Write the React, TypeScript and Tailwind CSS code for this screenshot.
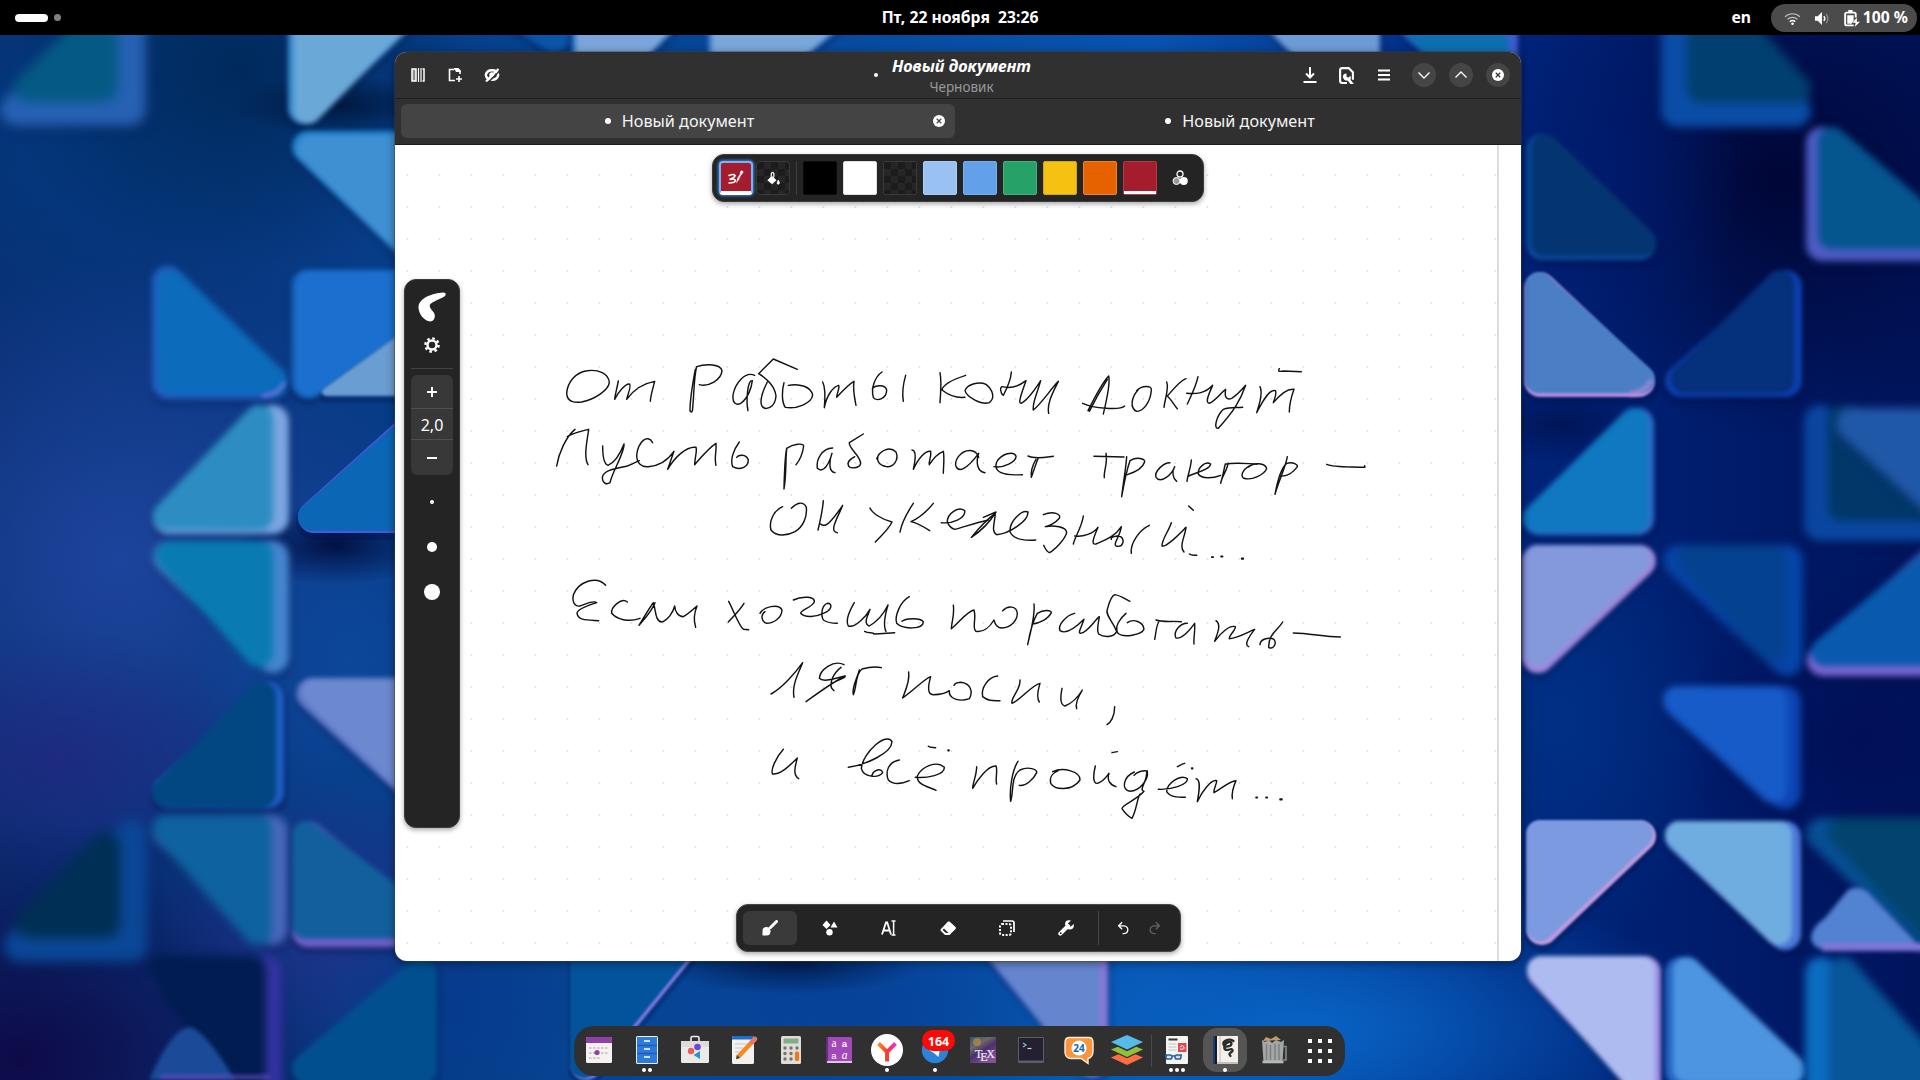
import React from "react";

type Corner = "tl" | "tr" | "bl" | "br";
type Tri = {
  x: number; y: number; w: number; h: number; c: Corner;
  face: string; rim?: string; l?: number; r?: number; t?: number; b?: number; blur?: number; rad?: number;
};

const TRIS: Tri[] = [
  { x: 0, y: -14, w: 146, h: 140, c: "br", face: "#045a85", rim: "#2661b4", r: 28, b: 24, l: 14, t: 14, blur: 4.5 },
  { x: 288, y: -20, w: 150, h: 144, c: "tl", face: "#6aa8d8", rim: "#3b8ccf", l: 6, r: 2, blur: 2 },
  { x: 292, y: 131, w: 142, h: 137, c: "tr", face: "#3f8fd3", rim: "#1f82cc", l: 5, t: 4, blur: 2 },
  { x: 152, y: 266, w: 136, h: 133, c: "bl", face: "#0c6bbb", rim: "#2560c8", l: 5, b: 4, t: 4, blur: 2.4 },
  { x: 291, y: 270, w: 170, h: 128, c: "tl", face: "#1b70cf", rim: "#1560b8", l: 5, blur: 2 },
  { x: 322, y: 300, w: 130, h: 96, c: "br", face: "#6a9dd2", blur: 1.2, rad: 4 },
  { x: 153, y: 405, w: 136, h: 129, c: "br", face: "#2d8dc2", rim: "#7aa6e2", r: 16, b: 4, blur: 2.4 },
  { x: 298, y: 404, w: 140, h: 129, c: "br", face: "#0b66b6", rim: "#4b56dc", b: 2, blur: 0.6 },
  { x: 153, y: 541, w: 136, h: 132, c: "tr", face: "#097bb2", rim: "#4585d0", r: 16, l: 3, b: 6, blur: 3 },
  { x: 152, y: 682, w: 132, h: 126, c: "br", face: "#024782", rim: "#1e5cc4", r: 8, b: 1, blur: 1.5 },
  { x: 296, y: 678, w: 140, h: 130, c: "tr", face: "#6c88cf", rim: "#5a74c8", l: 5, blur: 2 },
  { x: 4, y: 820, w: 144, h: 142, c: "br", face: "#002f55", rim: "#0a4796", r: 28, b: 24, l: 12, t: 12, blur: 4.5 },
  { x: 152, y: 815, w: 136, h: 130, c: "tr", face: "#0e629f", rim: "#4868bc", r: 16, blur: 3.4 },
  { x: 292, y: 821, w: 150, h: 126, c: "bl", face: "#135f9e", rim: "#735fc8", b: 8, blur: 2 },
  { x: 148, y: 956, w: 134, h: 150, c: "tr", face: "#001c50", rim: "#3434a4", r: 16, blur: 4 },
  { x: 292, y: 957, w: 145, h: 128, c: "br", face: "#024f90", blur: 2 },
  { x: 1661, y: -30, w: 150, h: 157, c: "bl", face: "#003f70", rim: "#0a4da6", l: 26, b: 24, blur: 4 },
  { x: 1526, y: 134, w: 130, h: 126, c: "bl", face: "#043572", rim: "#0a4a9c", l: 5, b: 4, blur: 1.5 },
  { x: 1806, y: 127, w: 150, h: 134, c: "bl", face: "#05558f", rim: "#4d5cc4", l: 12, b: 12, blur: 2.8 },
  { x: 1524, y: 272, w: 131, h: 125, c: "bl", face: "#4a7fc6", rim: "#b08be0", b: 4, l: 1, blur: 1 },
  { x: 1665, y: 270, w: 137, h: 127, c: "br", face: "#04307c", rim: "#0b3eac", l: 6, r: 8, b: 4, blur: 1.5 },
  { x: 1523, y: 408, w: 131, h: 127, c: "br", face: "#0f78c0", rim: "#2b6fcb", r: 6, b: 3, blur: 2 },
  { x: 1804, y: 405, w: 190, h: 136, c: "bl", face: "#00386a", rim: "#0a46a0", l: 24, b: 20, blur: 3.5 },
  { x: 1836, y: 408, w: 140, h: 130, c: "tr", face: "#2058a8", blur: 4 },
  { x: 1522, y: 545, w: 134, h: 128, c: "tl", face: "#8499dc", rim: "#a088dc", r: 5, b: 7, l: 2, blur: 1.8 },
  { x: 1663, y: 545, w: 140, h: 131, c: "tr", face: "#044290", rim: "#0644a8", l: 14, r: 16, b: 14, blur: 3.5 },
  { x: 1807, y: 543, w: 146, h: 133, c: "br", face: "#095aae", rim: "#7766d2", b: 10, l: 4, blur: 2.4 },
  { x: 1663, y: 686, w: 138, h: 123, c: "tr", face: "#165bc8", rim: "#0c44b4", r: 14, b: 6, blur: 2.8 },
  { x: 1526, y: 820, w: 130, h: 125, c: "tl", face: "#7c9ae0", rim: "#c09ade", r: 3, b: 4, blur: 1 },
  { x: 1665, y: 821, w: 136, h: 129, c: "tr", face: "#6facdf", rim: "#4b78da", r: 9, b: 5, blur: 1.8 },
  { x: 1806, y: 818, w: 190, h: 180, c: "tr", face: "#02446f", rim: "#064f94", l: 22, blur: 4 },
  { x: 1527, y: 956, w: 134, h: 140, c: "tr", face: "#aebbf0", rim: "#a08ee4", r: 6, blur: 1.6 },
  { x: 1665, y: 957, w: 140, h: 130, c: "bl", face: "#4d95e0", rim: "#2466c2", l: 8, b: 4, blur: 2 },
  { x: 1805, y: 957, w: 160, h: 150, c: "bl", face: "#085598", rim: "#0b6cc0", l: 24, blur: 3.5 },
  { x: 380, y: -80, w: 190, h: 132, c: "tr", face: "#0a55a8", blur: 2 },
  { x: 572, y: -10, w: 120, h: 120, c: "tl", face: "#7ba5da", rim: "#2f7acb", l: 4, blur: 2 },
  { x: 708, y: -10, w: 150, h: 130, c: "tl", face: "#79a7da", rim: "#3c80d0", l: 4, blur: 2 },
  { x: 1270, y: 10, w: 110, h: 110, c: "tr", face: "#6c9bd8", blur: 2 },
  { x: 1400, y: 10, w: 118, h: 110, c: "tr", face: "#0d6fb0", rim: "#3a5ed0", r: 10, blur: 2 },
  { x: 570, y: 930, w: 128, h: 150, c: "tl", face: "#03539c", rim: "#7f7be4", r: 2, b: 2, blur: 0.8 },
  { x: 978, y: 925, w: 130, h: 152, c: "tr", face: "#6585cf", rim: "#8878d8", r: 8, b: 4, blur: 2 },
];

function pts(x0: number, y0: number, x1: number, y1: number, c: Corner, r: number) {
  const a = x0 + r, b = x1 - r, t = y0 + r, d = y1 - r;
  if (c === "tl") return `${a},${t} ${b},${t} ${a},${d}`;
  if (c === "tr") return `${a},${t} ${b},${t} ${b},${d}`;
  if (c === "bl") return `${a},${t} ${a},${d} ${b},${d}`;
  return `${b},${t} ${a},${d} ${b},${d}`;
}

function Triangle({ t }: { t: Tri }) {
  const R = t.rad ?? 16;
  const x1 = t.x + t.w, y1 = t.y + t.h;
  const faceR = t.rim ? Math.max(R - 5, 3) + 3 : R;
  return (
    <g style={{ filter: `blur(${(t.blur ?? 1) * 1.25}px)` }}>
      <polygon points={pts(t.x, t.y + 3, x1 + 2, y1 + 5, t.c, R)} fill="#000c3c" stroke="#000c3c" strokeWidth={R * 2 + 4} strokeLinejoin="round" opacity="0.25" />
      {t.rim && <polygon points={pts(t.x, t.y, x1, y1, t.c, R)} fill={t.rim} stroke={t.rim} strokeWidth={R * 2} strokeLinejoin="round" />}
      <polygon
        points={pts(t.x + (t.l ?? 0), t.y + (t.t ?? 0), x1 - (t.r ?? 0), y1 - (t.b ?? 0), t.c, faceR)}
        fill={t.face} stroke={t.face} strokeWidth={faceR * 2} strokeLinejoin="round"
      />
    </g>
  );
}

const GLOWS: [number, number, number, number, string, number][] = [
  [60, 120, 300, 260, "#02387c", 0.9],
  [240, 70, 240, 200, "#002a5c", 1],
  [120, 560, 300, 300, "#1d449c", 1],
  [60, 760, 220, 130, "#26227e", 0.6],
  [20, 1060, 340, 240, "#0e0a48", 1],
  [350, 660, 160, 200, "#0c489c", 0.9],
  [330, 920, 170, 140, "#26308c", 0.8],
  [335, 545, 100, 40, "#000c3c", 0.9],
  [340, 105, 110, 30, "#00173c", 0.9],
  [1780, 180, 260, 260, "#000636", 1],
  [1600, 180, 140, 260, "#001c70", 0.8],
  [1560, 720, 160, 240, "#003084", 1],
  [1860, 740, 180, 180, "#001058", 1],
  [1560, 425, 90, 40, "#000c44", 0.6],
  [1300, 1030, 420, 160, "#0863c4", 1],
  [860, 1010, 260, 120, "#063f96", 0.8],
  [790, 965, 130, 30, "#001440", 0.8],
  [450, 1010, 120, 120, "#063a8c", 0.8],
];

function Wallpaper() {
  return (
    <svg className="absolute inset-0 h-full w-full" viewBox="0 0 1920 1080" preserveAspectRatio="none">
      <defs>
        <linearGradient id="base" x1="0" x2="1" y1="0" y2="0">
          <stop offset="0" stopColor="#0a2f74" />
          <stop offset="0.25" stopColor="#06408c" />
          <stop offset="0.6" stopColor="#0853ae" />
          <stop offset="0.78" stopColor="#00257c" />
          <stop offset="1" stopColor="#00145c" />
        </linearGradient>
        {GLOWS.map((g, i) => (
          <radialGradient id={`glow${i}`} key={i}>
            <stop offset="0" stopColor={g[4]} stopOpacity={g[5]} />
            <stop offset="1" stopColor={g[4]} stopOpacity="0" />
          </radialGradient>
        ))}
      </defs>
      <rect width="1920" height="1080" fill="url(#base)" />
      {GLOWS.map((g, i) => <ellipse key={i} cx={g[0]} cy={g[1]} rx={g[2]} ry={g[3]} fill={`url(#glow${i})`} />)}
      {TRIS.map((t, i) => <Triangle key={i} t={t} />)}
      <g style={{ filter: "blur(2px)" }}>
        <path d="M150 1078 Q172 1028 190 1027 Q205 1030 235 1080 L150 1080Z" fill="#1b4b98" />
        <path d="M160 1077H270" stroke="#6a4cc4" strokeWidth="3" />
        <path d="M1812 942 Q1808 930 1825 918 L1848 890 Q1858 884 1868 892 L1920 946 V950 H1830 Q1816 950 1812 942Z" fill="#5282d2" />
        <path d="M1822 947H1925" stroke="#8076d8" strokeWidth="8" />
        <path d="M262 396 Q280 394 284 382" stroke="#7c78dc" strokeWidth="3" fill="none" />
        <path d="M1630 394 Q1648 391 1651 380" stroke="#c48ae0" strokeWidth="3" fill="none" />
      </g>
    </svg>
  );
}

const INK: { dx: number; dy: number; d: string[] }[] = [
  { dx: 540, dy: 340, d: [
    "M142 92C110 95 82 125 80 160C82 190 110 188 125 186C165 178 205 150 208 128C206 100 175 88 142 92",
    "M235 123C231 145 226 160 224 178C235 155 258 130 268 132C276 136 264 160 260 178C280 150 310 130 344 124C340 140 332 165 331 184",
    "M466 88C458 130 450 180 450 212C454 220 458 215 458 205C462 160 462 110 470 80C500 70 542 73 546 92C544 120 505 142 478 134",
    "M644 106C615 93 585 130 579 165C577 192 590 196 602 190C625 175 635 140 637 122C622 118 618 185 624 212",
    "M772 88L700 57L656 101C680 115 705 140 708 168C706 195 690 207 675 205C655 200 662 165 682 126",
    "M732 128C726 150 724 185 736 202C770 208 815 190 818 165C812 140 780 130 745 136",
    "M848 126C858 145 855 180 853 203C860 165 880 140 896 136C900 145 890 160 890 172C910 150 930 130 942 124C938 150 944 175 948 196",
    "M1026 96C1005 110 992 145 1000 172C1008 185 1040 178 1040 150C1036 132 1005 135 997 146M1097 106C1090 130 1086 160 1090 184",
    "M1200 98C1206 130 1201 165 1200 188M1277 106C1240 118 1208 135 1206 150C1225 165 1245 175 1275 172",
    "M50 378C56 340 78 290 105 268M82 290C100 278 125 274 146 268C142 300 130 350 144 374",
    "M188 318C188 345 190 372 204 376C230 365 245 330 252 312C255 335 215 400 210 428C200 434 188 432 187 412C190 390 225 386 262 378C280 372 290 365 298 362",
    "M338 308C322 280 295 305 290 345C290 370 305 382 325 380C350 378 380 365 402 334C396 350 388 375 383 388C405 350 440 318 468 322C472 335 464 355 464 374C485 350 505 325 528 310C530 335 522 355 528 376",
    "M598 306C580 330 570 360 578 380C600 392 625 382 625 360C618 340 595 345 590 352",
    "M740 328C736 360 740 400 732 447C733 400 735 350 740 325C760 312 790 308 791 318C788 340 780 360 768 374",
    "M878 324C845 325 828 360 832 385C850 402 868 370 876 340C868 360 864 395 885 398",
    "M970 282L928 308C925 325 960 345 962 370C960 385 928 388 925 376C920 362 935 356 944 350",
    "M1010 356C1020 330 1050 318 1068 336C1078 360 1060 382 1040 380C1015 375 1008 360 1016 344",
    "M1116 330C1132 330 1124 370 1120 388C1135 355 1155 332 1172 334C1175 350 1165 365 1168 374C1180 355 1195 340 1210 334C1214 355 1210 380 1210 400",
    "M728 500C700 512 686 545 693 570C710 592 745 586 765 575C790 560 802 530 799 502C790 482 770 488 754 505",
    "M850 482C848 510 840 545 834 570M842 552C850 560 860 555 870 545C885 530 895 515 908 496C895 530 865 575 892 578",
    "M990 504C996 520 1030 540 1056 546C1045 570 1020 590 1006 606M1120 490C1100 520 1085 550 1080 576M1180 490C1160 515 1135 535 1113 545C1130 548 1150 560 1169 572",
    "M1204 548C1235 552 1278 535 1274 512C1255 498 1222 520 1222 545C1225 560 1240 568 1245 568C1270 562 1300 550 1345 540",
  ] },
  { dx: 950, dy: 340, d: [
    "M45 152C50 135 85 122 108 133C130 150 135 175 118 188C95 195 50 172 45 152",
    "M184 96C182 125 168 150 160 166C150 160 150 140 156 140C180 146 205 140 228 122C215 160 203 190 213 190C235 180 260 140 272 122C262 160 246 190 250 210C275 190 300 150 325 124C310 155 290 190 296 220",
    "M398 190C430 205 510 212 524 198M414 212C430 180 455 130 476 108C482 130 470 180 460 222M418 214C435 180 458 140 472 118",
    "M560 152C575 136 607 135 604 150C602 185 580 215 560 214C538 205 545 170 564 150",
    "M650 126C658 145 644 180 642 202M708 116C690 122 668 150 652 168C665 180 672 195 682 206",
    "M744 110C738 140 722 170 712 192M710 160C735 162 765 162 788 136C775 165 765 188 778 190C800 180 815 155 827 148C822 175 832 180 845 175C862 165 875 150 887 136C870 185 850 215 805 265C790 268 798 230 820 208C840 200 860 204 878 202",
    "M930 140C940 160 928 195 920 218C940 180 960 145 976 152C982 160 972 180 970 188C985 170 1010 145 1032 148C1024 170 1018 195 1018 216M988 86C982 97 990 94 1000 93L1054 95",
    "M86 352C78 325 45 325 25 350C8 375 20 395 40 386C60 375 75 355 86 340C78 365 80 395 105 398",
    "M132 380C160 385 200 365 198 348C190 332 155 340 140 366C130 395 155 408 217 404",
    "M234 348C255 358 285 352 310 349M258 358C248 375 242 395 244 412C252 390 258 370 264 356",
    "M432 349L522 351M468 340C474 370 460 395 463 413",
    "M530 350C528 385 520 425 515 470C522 430 530 390 540 362C560 350 586 355 584 366C578 385 560 395 532 404",
    "M660 368C640 368 612 395 618 412C632 432 665 405 674 380C665 395 668 415 680 424",
    "M724 360C722 385 712 410 711 424M716 408C735 398 780 390 782 372C765 362 742 385 745 402C755 418 790 415 812 406",
    "M834 370C832 390 815 410 812 430C820 405 822 385 826 372C860 366 900 372 922 372",
    "M906 374C880 385 870 405 880 414C905 424 945 402 950 385C945 368 912 366 894 382",
    "M1012 350C1006 385 985 425 975 463C982 425 992 385 1010 370C1030 364 1044 375 1042 380C1030 398 1010 410 990 408",
    "M1130 373C1150 382 1190 380 1245 382L1244 377",
    "M100 532L138 516C120 545 90 575 64 592C90 560 115 535 136 520C135 545 122 575 140 584C175 582 235 545 234 516C215 508 178 545 180 575C190 600 225 602 257 600",
    "M280 524C310 512 335 522 328 535C315 550 295 558 286 560C310 555 350 560 350 578C345 600 310 632 298 638C290 635 285 625 281 616",
    "M400 528C396 560 375 590 370 612M374 588C400 592 430 580 444 562C430 595 422 615 438 612C465 600 495 590 514 560C510 590 488 612 498 618C520 624 525 600 512 590C500 585 480 592 484 598M598 556C568 570 540 610 544 640",
    "M664 548C655 575 635 600 636 618C650 622 685 585 708 562C705 590 686 620 702 636M716 498L730 511",
    "M718 642C725 647 732 645 740 646M785 651h5v1h-5zM813 649h5v1h-5zM875 655h5v2h-5z",
  ] },
  { dx: 540, dy: 570, d: [
    "M197 46C170 15 115 35 100 75C95 100 108 114 125 106C145 98 165 92 170 98C150 105 113 115 111 130C115 152 140 150 176 152",
    "M262 96C245 82 213 110 215 130C230 148 265 158 300 145",
    "M345 98C335 125 310 150 297 166C310 145 330 110 340 98C348 120 345 154 365 156C385 150 400 125 404 108C405 125 415 140 430 140C445 132 460 118 471 108C462 130 460 150 467 172",
    "M566 94C580 120 595 165 610 178L626 179M612 100C600 120 580 140 565 156",
    "M660 130C670 112 715 98 726 120C725 145 700 160 680 160C665 155 660 135 675 125",
    "M760 90C785 78 830 78 822 98C810 115 782 120 782 130C795 145 830 140 850 130C875 122 880 100 862 100C845 105 842 135 850 150C862 158 875 160 892 160",
    "M943 98C930 120 915 150 925 168C945 175 978 140 990 118C985 135 968 160 988 168C1010 155 1032 130 1044 105C1035 135 1028 165 1038 184M974 184C985 192 1000 184 1002 192C1030 192 1045 188 1064 188",
    "M1108 80C1080 95 1063 140 1070 160C1090 180 1150 178 1150 155C1140 142 1095 145 1086 154",
    "M693 372C725 355 765 310 788 278C775 310 755 345 762 382",
    "M912 284C880 268 840 300 838 325C850 338 885 325 916 318C880 335 840 365 798 395M903 292C878 310 862 350 882 362M875 340L914 322",
    "M958 300C954 320 934 350 940 374C950 355 946 310 966 297C985 292 1010 290 1024 293",
    "M1106 306C1110 335 1095 365 1088 384C1120 362 1155 325 1172 320C1165 345 1160 374 1180 374C1205 374 1220 368 1228 362C1225 388 1260 396 1288 386C1300 365 1292 340 1262 337C1250 338 1244 342 1242 346",
    "M730 538C710 560 690 600 698 612C725 614 755 580 772 564C765 590 758 615 776 626",
    "M925 592C975 585 1055 550 1056 515C1040 485 970 545 964 595C970 622 1015 626 1028 608C1025 592 1000 600 996 616",
    "M1078 570C1045 575 1035 605 1045 630C1060 645 1085 642 1108 632",
    "M1126 622C1160 625 1215 615 1213 592C1190 570 1145 590 1132 618C1130 645 1165 650 1188 661M1165 529C1170 534 1178 532 1187 533M1224 540h3v2h-3z",
  ] },
  { dx: 950, dy: 570, d: [
    "M10 106C14 135 5 155 4 176C30 155 50 125 72 120C80 145 65 175 78 184C100 188 120 170 132 150C135 165 145 174 155 174C185 172 202 150 202 130C200 108 175 105 158 122",
    "M252 102C256 140 240 190 233 224C240 185 250 150 262 130C280 118 305 120 304 128C295 148 265 160 248 162",
    "M374 130C350 135 322 165 330 182C350 195 385 165 402 148C395 170 382 190 392 190C415 185 430 155 448 140C446 160 438 180 446 192C460 202 490 204 500 185C490 155 465 135 472 118C478 95 485 75 495 74C515 78 530 90 540 94",
    "M528 130C510 145 492 170 504 190C520 204 575 195 582 178C580 155 550 145 532 158",
    "M614 208C618 190 618 170 626 156M618 150C640 158 670 152 694 155",
    "M712 160C690 160 668 185 678 204C695 208 720 180 734 160C736 185 730 205 732 222",
    "M798 152C816 165 800 195 794 214C815 185 840 165 856 170C858 180 835 198 838 206C865 204 895 185 914 178C900 195 880 225 896 230",
    "M998 156C985 180 955 190 956 232C968 240 982 222 972 208C955 200 930 208 930 224",
    "M1030 189C1080 190 1120 200 1171 201",
    "M143 318C115 320 92 355 98 380C115 394 130 392 150 392",
    "M210 330C212 360 180 385 186 400C210 392 245 345 270 340C264 360 260 385 268 396",
    "M336 355C332 375 328 405 345 408C365 400 385 380 397 360C385 380 374 400 380 416",
    "M494 410C494 440 482 458 471 464",
    "M80 590C80 615 68 640 68 655C85 625 115 586 138 588C144 605 135 625 140 642",
    "M204 574C186 600 178 660 182 694C192 660 182 620 210 600C235 588 262 598 260 608C250 630 225 650 208 646",
    "M308 605C340 590 392 605 390 630C365 665 315 660 302 640C298 622 308 608 325 602",
    "M436 588C428 620 430 642 442 640C460 635 470 620 477 610C470 630 480 645 498 650M486 548L502 545",
    "M553 606C520 620 512 660 540 664C570 662 596 630 592 603C580 600 560 606 552 616M590 606C592 635 565 660 582 664C560 690 515 705 516 716C525 730 540 742 546 745C560 720 560 690 570 672",
    "M625 658C660 660 715 645 712 626C690 612 650 640 650 665C660 682 685 682 706 682M682 590C690 586 695 582 704 580M725 594h3v2h-3z",
    "M738 626C756 630 745 675 742 695C755 665 785 626 800 632C800 645 790 655 792 668C815 655 840 632 858 632C850 650 845 670 847 686",
    "M918 682h4v1h-4zM948 682h4v1h-4zM990 687h6v2h-6z",
  ] },
];

function Handwriting() {
  return (
    <svg className="absolute inset-0 h-full w-full" viewBox="395 145 1126 816" fill="none" stroke="#121212" strokeWidth="4.3" strokeLinecap="round" strokeLinejoin="round">
      <defs>
        <pattern id="dots" x="391" y="159" width="32" height="32" patternUnits="userSpaceOnUse">
          <circle cx="16.400" cy="16" r="1.100" fill="#cfe4f8" stroke="none" />
        </pattern>
      </defs>
      <rect x="395" y="150" width="1102" height="811" fill="url(#dots)" stroke="none" />
      {INK.map((g, i) => (
        <g key={i} transform={`translate(${g.dx} ${g.dy}) scale(.33333)`}>
          {g.d.map((d, j) => <path key={j} d={d} />)}
        </g>
      ))}
    </svg>
  );
}

function Icon({ children, size = 16, className = "" }: { children: React.ReactNode; size?: number; className?: string }) {
  return (
    <svg width={size} height={size} viewBox="0 0 16 16" fill="none" stroke="currentColor" strokeWidth="2" className={`shrink-0 ${className}`}>
      {children}
    </svg>
  );
}

const CloseGlyph = ({ x = "#303030", size = 12 }) => (
  <Icon size={size}><circle cx="8" cy="8" r="8" fill="#fff" stroke="none" /><path d="M5 5l6 6M11 5l-6 6" stroke={x} strokeWidth="1.600" /></Icon>
);

function TopBar() {
  return (
    <div className="relative grid h-[35px] grid-cols-3 items-center bg-black text-[15.7px] font-bold text-white">
      <div className="flex items-center gap-1.5 pl-[15px]">
        <span className="h-2 w-[33px] rounded-full bg-white" />
        <span className="h-[7px] w-[7px] rounded-full bg-[#808080]" />
      </div>
      <div className="pt-px text-center whitespace-pre">Пт, 22 ноября  23:26</div>
      <div className="flex items-center justify-end pt-px pr-[3px]">
        <span className="mr-5">en</span>
        <div className="flex h-7 w-[146px] items-center justify-end rounded-full bg-[#4b4b4b] pr-[9px]">
          <Icon size={17}>
            <path d="M1 6.400a10 10 0 0 1 14 0M3.200 8.800a7 7 0 0 1 9.600 0" stroke="#c2c2c2" strokeWidth="1.100" />
            <path d="M5.400 11a4 4 0 0 1 5.200 0" stroke="#fff" strokeWidth="1.300" /><circle cx="8" cy="13" r="1.200" fill="#fff" stroke="none" />
          </Icon>
          <Icon size={15} className="ml-[13px]">
            <path d="M1 5.500h3L8.500 1v14L4 10.500H1z" fill="#fff" stroke="none" />
            <path d="M10.500 5.500q2 2.500 0 5" stroke="#fff" strokeWidth="1.600" /><path d="M13 3q3.500 5 0 10" stroke="#8a8a8a" strokeWidth="1.500" />
          </Icon>
          <Icon size={17} className="ml-[14px]">
            <path d="M10 14.500H3.500q-1.500 0-1.500-1.500V4q0-1.500 1.500-1.500h7Q12 2.500 12 4v3" stroke="#fff" strokeWidth="1.800" />
            <path d="M5 0h4v2H5zM4 5h6v5l-2 3H4z" fill="#fff" stroke="none" /><path d="M13 7l-4 5h3l-1 4 5-5h-3z" fill="#fff" stroke="none" />
          </Icon>
          <span className="ml-[3px] whitespace-nowrap">100 %</span>
        </div>
      </div>
    </div>
  );
}

function Header() {
  return (
    <div className="grid h-[47px] grid-cols-[1fr_auto_1fr] items-center border-b border-[#1f1f1f] bg-[#303030] text-white">
      <div className="flex items-center gap-[21px] pl-[15px]">
        <Icon>
          <rect x="2" y="2" width="4" height="12" fill="#8c8c8c" strokeWidth="1.500" /><path d="M8.500 1v14M11 1v14" strokeWidth="1.200" /><path d="M12.500 2h1.500v12h-1.500" strokeWidth="1.500" />
        </Icon>
        <Icon><path d="M8 13.500H2.500v-11H7M7 2h4l2 2v3M12 9v6M9 12h6" strokeWidth="1.600" /><path d="M7 1h4l3 3v1H9z" fill="currentColor" stroke="none" /></Icon>
        <Icon>
          <path d="M8 3.200c-3.300 0-5.700 2-6.200 4.800.5 2.800 2.900 4.800 6.200 4.800s5.700-2 6.200-4.800C13.700 5.200 11.300 3.200 8 3.200z" strokeWidth="2.400" />
          <circle cx="8" cy="8" r="2.700" fill="currentColor" stroke="none" /><path d="M3.500 16L16.500 3" stroke="#303030" strokeWidth="1.500" /><path d="M2 14.500L14.500 2" strokeWidth="2.200" />
        </Icon>
      </div>
      <div className="flex items-center gap-[14px] pr-[11px]">
        <span className="h-1 w-1 rounded-full bg-white" />
        <div className="flex flex-col items-center pt-[3px]">
          <span className="text-[16.4px] leading-5 font-bold italic">Новый документ</span>
          <span className="text-[13.5px] leading-[22px] text-[#989898]">Черновик</span>
        </div>
      </div>
      <div className="flex items-center justify-end pr-[11px]">
        <Icon><path d="M8 0v10M4 6.500l4 4 4-4M1.500 15h13" /></Icon>
        <Icon size={17} className="ml-[20px]">
          <path d="M8.500 15H4q-2 0-2-2V3q0-2 2-2h6l4 4v7" /><path d="M4.500 9.500q0-3.500 3.500-3.500v3l1.700 1 1.800-1.700q1.200 2 .2 3.700l3.300 4h-3.300l-2.400-3q-4.300 0-4.800-4z" fill="currentColor" stroke="none" />
        </Icon>
        <Icon className="ml-[21px]"><path d="M2 3.500h12M2 8h12M2 12.500h12" /></Icon>
        <div className="ml-5 flex gap-[13px]">
          <span className="grid h-6 w-6 place-items-center rounded-full bg-[#454545]"><Icon><path d="M2.500 5.500L8 11l5.500-5.500" strokeWidth="1.300" /></Icon></span>
          <span className="grid h-6 w-6 place-items-center rounded-full bg-[#454545]"><Icon><path d="M2.500 10.500L8 5l5.500 5.500" strokeWidth="1.300" /></Icon></span>
          <span className="grid h-6 w-6 place-items-center rounded-full bg-[#454545]"><CloseGlyph /></span>
        </div>
      </div>
    </div>
  );
}

function Tabs() {
  return (
    <div className="flex h-[46px] gap-[6px] border-b border-[#1b1b1b] bg-[#303030] px-[6px] pt-[5px] text-[16.2px] text-[#f4f4f4]">
      <div className="flex h-[34px] w-[554px] items-center rounded-[6px] bg-[#444] pr-[10px]">
        <div className="ml-[25px] flex flex-1 items-center justify-center gap-[11px]"><span className="h-[6px] w-[6px] rounded-full bg-white" />Новый документ</div>
        <CloseGlyph x="#444" />
      </div>
      <div className="flex h-[34px] flex-1 items-center justify-center gap-[11px] pl-[4px]"><span className="h-[6px] w-[6px] rounded-full bg-white" />Новый документ</div>
    </div>
  );
}

const CHECKER = "bg-[#1c1c1c] bg-[conic-gradient(#262626_25%,transparent_0_50%,#262626_0_75%,transparent_0)] bg-[size:14px_14px]";
const SWATCHES = [
  "bg-black border-[#0c0c0c]", "bg-white border-[#dedede]", CHECKER + " border-[#3a3a3a]", "bg-[#99c1f1] border-[#a8cdf6]", "bg-[#62a0ea] border-[#78aef0]",
  "bg-[#26a269] border-[#45b07e]", "bg-[#f5c211] border-[#d3a70e]", "bg-[#e66100] border-[#f0822e]", "bg-[#a51d2d] border-[#b43a49]",
];

function ColorBar() {
  return (
    <div className="absolute top-[9px] left-[317px] flex h-12 w-[492px] items-center rounded-xl border border-[#3c3c3c] bg-[#242424] px-[6px] text-white shadow-[0_2px_5px_rgba(0,0,0,.35)]">
      <div className="grid h-[34px] w-[34px] place-items-center rounded-[4px] border-2 border-b-4 border-[#78b4f4] border-b-white bg-[#a51d2d] shadow-[0_0_3px_1px_#3584e4]">
        <Icon><path d="M1 6.500q4.500-2 6 0 .5 1.500-5.500 4 5.500-1 5.800.8.200 2.700-6.300 2.700" strokeWidth="1.600" strokeLinecap="round" /><path d="M8 14.500l1.500-6 2.200 1.200z" fill="currentColor" stroke="none" /><path d="M10.500 9L14.500 2.500" strokeWidth="1.600" /><path d="M12.800 4.500L14.500 2" strokeWidth="2.800" /></Icon>
      </div>
      <div className={"ml-[3px] grid h-[34px] w-[34px] place-items-center rounded-[4px] border border-[#3a3a3a] " + CHECKER}>
        <Icon size={14}><path d="M1.500 10.500L7.500 6l4.500 4.500-5 4.500z" fill="currentColor" stroke="none" /><path d="M3 10.500L6 7V3q1.500-3 3 0v4" strokeWidth="1.400" /><path d="M14 10.500q2.500 4.500 0 4.500t0-4.500z" fill="currentColor" strokeWidth="1" /></Icon>
      </div>
      <span className="mx-[6px] h-[34px] w-px bg-[#404040]" />
      <div className="flex gap-[6px]">
        {SWATCHES.map((s, i) => (
          <div key={i} className={"flex h-[34px] w-[34px] items-end rounded-[2px] border " + s}>{i === 8 && <span className="h-[3px] w-full bg-white" />}</div>
        ))}
      </div>
      <Icon className="ml-[15px]"><circle cx="8" cy="4" r="3" strokeWidth="1.300" /><circle cx="4.500" cy="11" r="3.500" fill="#9a9a9a" strokeWidth="1" /><circle cx="11.800" cy="11" r="4" fill="currentColor" stroke="none" /></Icon>
    </div>
  );
}

function SideBar() {
  return (
    <div className="absolute top-[134px] left-[9px] flex h-[549px] w-14 flex-col items-center rounded-xl border border-[#3c3c3c] bg-[#242424] text-white shadow-[0_2px_5px_rgba(0,0,0,.35)]">
      <svg width="28" height="30" viewBox="0 0 28 30" className="mt-3"><path d="M25 .5C15 1 0 6 .5 16 1 23 7 29 12 29.500c4 0 5.500-4 4.500-7.500C15.500 19 10.500 16 12 12.500 14 9.500 24 6.500 27 4 28.500 2 27.500.3 25 .5z" fill="#fff" /></svg>
      <Icon className="mt-[15px]"><circle cx="8" cy="8" r="4.500" strokeWidth="2.400" /><circle cx="8" cy="8" r="6.600" strokeWidth="2.400" strokeDasharray="2.600 2.584" /></Icon>
      <span className="mt-[15px] h-px w-[42px] bg-[#444]" />
      <div className="mt-[6px] grid h-[100px] w-[42px] grid-rows-[34px_31px_35px] divide-y divide-[#505050] overflow-hidden rounded-[6px] bg-[#383838]">
        <span className="grid place-items-center"><Icon size={16}><path d="M8 3v10M3 8h10" /></Icon></span>
        <span className="grid place-items-center pt-px text-[16px]">2,0</span>
        <span className="grid place-items-center"><Icon size={16}><path d="M3 8h10" /></Icon></span>
      </div>
      <span className="mt-[25px] h-1 w-1 rounded-full bg-white" />
      <span className="mt-[38px] h-[10px] w-[10px] rounded-full bg-white" />
      <span className="mt-8 h-4 w-4 rounded-full bg-white" />
    </div>
  );
}

function ToolBar() {
  return (
    <div className="absolute bottom-[9px] left-[341px] flex h-12 w-[445px] items-center rounded-xl border border-[#484848] bg-[#242424] pl-[6px] text-white shadow-[0_2px_5px_rgba(0,0,0,.35)]">
      <div className="flex gap-[5.2px]">
        <span className="grid h-[34px] w-[54px] place-items-center rounded-[6px] bg-[#3a3a3a]">
          <Icon><path d="M14.500 1.500L8.500 7.500" strokeWidth="3" strokeLinecap="round" /><path d="M.5 15.500V11q0-4 4-4t4 4.200-4 4.300z" fill="currentColor" stroke="none" /></Icon>
        </span>
        <span className="grid h-[34px] w-[54px] place-items-center pl-[2px]"><Icon><path d="M4.500.5L8.500 5l-4 4-4-4zM12 1.500L15.500 7.500h-7z" fill="currentColor" stroke="none" /><circle cx="7.500" cy="12.300" r="3.200" fill="currentColor" stroke="none" /></Icon></span>
        <span className="grid h-[34px] w-[54px] place-items-center pl-[2px]"><Icon><path d="M1 14.500L5 2.500h1.200L10 14.500M2.500 10.500h6" strokeWidth="1.800" /><path d="M10.500 1h4M10.500 15h4M12.600 1v14" strokeWidth="1.500" /></Icon></span>
        <span className="grid h-[34px] w-[54px] place-items-center"><Icon><path d="M9.500 1.500l6 5.500q.8 1 0 2l-6 6H5L1 11q-1-1 0-2l7-7.500z" fill="currentColor" stroke="none" /><path d="M4 8.500l4.500 4.500H6L2.500 10z" fill="#242424" stroke="none" /></Icon></span>
        <span className="grid h-[34px] w-[54px] place-items-center"><Icon><rect x="1" y="4" width="11" height="11" rx="2" strokeDasharray="2 1.500" /><path d="M4 1h9q2 0 2 2v9" strokeWidth="1.700" /></Icon></span>
        <span className="grid h-[34px] w-[54px] place-items-center"><Icon><path d="M2.300 13.700L10 6" strokeWidth="4" strokeLinecap="round" /><path d="M13 .6q-6-1.500-6 4L10.500 9.500q6 .5 5.400-5.500L13 6.500l-2.500-.8L9.900 3.500z" fill="currentColor" stroke="none" /><circle cx="2.800" cy="13.200" r=".9" fill="#242424" stroke="none" /></Icon></span>
      </div>
      <span className="ml-[5px] h-[34px] w-px bg-[#484848]" />
      <Icon size={14} className="ml-[17px]"><path d="M7 1.500L3 5.500l4 4M3 5.500h6q4.500.5 4.500 4.500t-4.500 4.500H7.500" strokeWidth="1.500" /></Icon>
      <Icon size={14} className="ml-[18px] text-[#626262]"><path d="M9 1.500l4 4-4 4M13 5.500H7q-4.500.5-4.500 4.500t4.500 4.500h1.500" strokeWidth="1.500" /></Icon>
    </div>
  );
}

function Cell({ children, dots = 0, active = false }: { children: React.ReactNode; dots?: number; active?: boolean }) {
  return (
    <div className="relative grid h-[50px] w-12 place-items-center">
      {active && <span className="absolute top-[2px] left-[2px] h-11 w-11 rounded-[14px] bg-[#555]" />}
      <svg width="32" height="32" viewBox="0 0 32 32" className="relative -mt-[3px] overflow-visible">{children}</svg>
      {dots > 0 && (
        <span className="absolute bottom-[4px] left-0 flex w-full justify-center gap-[2px]">
          {Array.from({ length: dots }, (_, i) => <i key={i} className="h-1 w-1 rounded-full bg-white" />)}
        </span>
      )}
    </div>
  );
}

function Dock() {
  return (
    <div className="absolute top-[1026px] left-[574px] flex h-[50px] w-[771px] items-center rounded-[20px] bg-[#303030] pl-[1px]">
      <Cell>
        <rect x="3" y="3" width="26" height="26" rx="1.500" fill="#f4f1ef" /><path d="M3 9V4.500Q3 3 4.500 3h23Q29 3 29 4.500V9z" fill="#8e3fa8" />
        <g stroke="#c2bdb9" strokeWidth="1.600" strokeDasharray="2.500 1.500"><path d="M6 14h20M6 19h20M6 24h12" /></g><circle cx="14" cy="18.500" r="2.600" fill="#9141ac" />
      </Cell>
      <Cell dots={2}>
        <rect x="5" y="2" width="22" height="28" rx="1.500" fill="#e8eef6" /><rect x="6" y="3" width="20" height="26" fill="#2f7bdc" />
        <path d="M6 11.500h20M6 19.500h20" stroke="#1a5fb4" strokeWidth="1.400" /><path d="M13 7h6M13 15h6M13 23h6" stroke="#c8dcf4" strokeWidth="2" />
      </Cell>
      <Cell>
        <path d="M12 7V4q0-1.500 1.500-1.500h5Q20 2.500 20 4v3" fill="none" stroke="#f0efed" strokeWidth="1.600" /><rect x="2" y="7" width="28" height="22" rx="1.500" fill="#ebeae8" /><path d="M2 7h28v6H2z" fill="#dddcda" />
        <circle cx="18.500" cy="13" r="3.300" fill="#6a4ad4" /><circle cx="12" cy="17" r="3.200" fill="#ee5a5a" /><path d="M21 17v8l-6.500-4z" fill="#2496d8" />
      </Cell>
      <Cell>
        <rect x="5" y="2" width="22" height="28" rx="1.500" fill="#f2f1f0" /><path d="M5 5.500V3.500Q5 2 6.500 2h19Q27 2 27 3.500v2z" fill="#1c6fd0" /><path d="M8 10h14M8 14h10M8 18h8" stroke="#c9c7c5" strokeWidth="1.200" />
        <path d="M11.500 22.500L26.500 6.500" stroke="#f58a1f" strokeWidth="4.600" /><path d="M25 8L28 5" stroke="#e8746c" strokeWidth="4.600" strokeLinecap="round" /><path d="M9.800 20.700l3.400 3.200-4.200 1.400z" fill="#4c3a2a" />
      </Cell>
      <Cell>
        <rect x="6" y="2" width="20" height="28" rx="1.500" fill="#dfdcd7" /><rect x="8.500" y="4.500" width="15" height="5" rx="1" fill="#7fae88" />
        <g fill="#77726d"><circle cx="10" cy="14" r="1.700" /><circle cx="16" cy="14" r="1.700" /><circle cx="22" cy="14" r="1.700" /><circle cx="10" cy="19.500" r="1.700" /><circle cx="16" cy="19.500" r="1.700" /><circle cx="10" cy="25" r="1.700" /><circle cx="16" cy="25" r="1.700" /></g><rect x="20" y="17.500" width="4" height="9.500" rx="1.500" fill="#ef7a12" />
      </Cell>
      <Cell>
        <rect x="3" y="3" width="26" height="26" rx="1.500" fill="#a348b8" /><path d="M3 3h2v26H3z" fill="#613070" /><path d="M4 28h25" stroke="#ece6ee" strokeWidth="1.600" />
        <g fill="#fff" textAnchor="middle"><text x="11" y="12.500" fontSize="11.500" fontFamily="Liberation Serif">a</text><text x="21.500" y="12.500" fontSize="9.500" fontWeight="700" fontFamily="Liberation Sans">a</text><text x="11" y="24.500" fontSize="9.500" fontFamily="Liberation Sans">a</text><text x="21.500" y="24.500" fontSize="11.500" fontStyle="italic" fontFamily="Liberation Serif">a</text></g>
      </Cell>
      <Cell dots={1}>
        <defs><linearGradient id="ya"><stop offset="0" stopColor="#ff8a1e" /><stop offset=".5" stopColor="#fa3a2c" /><stop offset="1" stopColor="#f62ad0" /></linearGradient></defs>
        <circle cx="16" cy="16" r="16" fill="#fff" /><path d="M7.500 9.500L16 18l8.500-8.500M16 17v10.500" fill="none" stroke="url(#ya)" strokeWidth="4" />
      </Cell>
      <Cell dots={1}>
        <circle cx="16" cy="16" r="13.200" fill="#2a83d8" /><path d="M8 15l14-6-2.500 14-4.500-4z" fill="#fff" />
        <rect x="3" y="-4" width="33" height="21" rx="10.500" fill="#fe0808" /><text x="19.500" y="11.500" textAnchor="middle" fontSize="12.500" fontWeight="700" fill="#fff">164</text>
      </Cell>
      <Cell>
        <defs><linearGradient id="tex" x2="0.600" y2="1"><stop offset="0" stopColor="#2a5678" /><stop offset=".35" stopColor="#6d6868" /><stop offset=".6" stopColor="#49306e" /><stop offset="1" stopColor="#86509c" /></linearGradient></defs>
        <rect x="3" y="3" width="26" height="26" fill="url(#tex)" /><circle cx="10" cy="8" r="4" fill="#c8923c" opacity=".6" />
        <text x="8" y="24" fill="#f0eaf2" stroke="#f0eaf2" strokeWidth=".2" fontFamily="Liberation Serif" fontSize="12">T<tspan dx="-2" dy="3">E</tspan><tspan dx="-1.500" dy="-3">X</tspan></text>
      </Cell>
      <Cell><rect x="3" y="3" width="26" height="26" rx="1" fill="#5e5c64" /><rect x="4" y="4" width="24" height="22.500" fill="#241f31" /><path d="M8 9l3 2-3 2" fill="none" stroke="#66c4d8" strokeWidth="1.300" /><path d="M12.500 14.500h4" stroke="#d4d4da" strokeWidth="1.200" /></Cell>
      <Cell>
        <path d="M6 3.500h20q4 0 4 5v8q0 7-5 8v5l-7-5H8q-5.500 0-6-6V9q0-5.500 4-5.500z" fill="#f7943c" stroke="#fff0e0" strokeWidth="1.400" /><circle cx="16" cy="14" r="7.600" fill="#fff" /><text x="16" y="17.600" textAnchor="middle" fontSize="10" fontWeight="700" fill="#1668b0">24</text>
      </Cell>
      <Cell>
        <path d="M16 16.500l16 7L16 31 0 23.500z" fill="#ff6d42" /><path d="M16 9.500l16 7.300-16 7.400L0 16.800z" fill="#303030" /><path d="M16 9l16 6.500L16 23 0 15.500z" fill="#91c13a" /><path d="M16 3l16 6.500-16 7.800L0 9.500z" fill="#303030" /><path d="M16 1l16 7-16 7.500L0 8z" fill="#56bbe8" />
      </Cell>
      <span className="mr-[1px] h-8 w-px bg-[#4c4c4c]" />
      <Cell dots={3}>
        <rect x="5" y="2" width="22" height="28" rx="1" fill="#f4f4f2" /><path d="M7.500 5.500h9" stroke="#333" strokeWidth="2" /><path d="M7.500 10h8M7.500 13h8M7.500 16h8" stroke="#c5c3c0" strokeWidth="1.200" /><rect x="17" y="9" width="8.500" height="9" fill="#e04a50" /><path d="M19 13q3-3 4 0t-4 2" fill="none" stroke="#fff" />
        <g fill="#cfdcea" stroke="#2c5f98" strokeWidth="1.500"><rect x="5" y="21" width="6" height="4" rx="1.800" /><rect x="14" y="21" width="6" height="4" rx="1.800" /><path d="M11 22h3M4 21h2M19 21h2" /></g>
      </Cell>
      <Cell dots={1} active>
        <path d="M4 2h8v28H4z" fill="#1d3c68" /><path d="M6 2h3v28H6z" fill="#101c30" /><rect x="8" y="2" width="21" height="26" fill="#f3efeb" /><path d="M8 28h21v2H8z" fill="#c8c0b8" /><path d="M11 2v26" stroke="#e8a8a0" />
        <path d="M24.500 7c-5-3-11 0-10 3.500s8 2 8-1-6-1.500-7 2.500 2 4.500 5 3.500 4 1 2 2.500-3 2-1 4" fill="none" stroke="#2b2b2b" strokeWidth="2.300" strokeLinecap="round" />
      </Cell>
      <Cell>
        <path d="M6 7l3-4 5 2 5-3 5 4z" fill="#c39a6b" /><path d="M5 6l3 2 4-2 3 3 4-3 5 2 3-2-1.500 22h-19z" fill="#a3a8a6" /><path d="M9.500 10v16M13.500 11v15M18 10v16M22 10v16" stroke="#7b817f" strokeWidth="1.500" /><path d="M5.500 28h21" stroke="#b4b9b7" strokeWidth="2.600" /><path d="M26 12.500h3V26h-3" fill="none" stroke="#868c8a" strokeWidth="1.600" />
      </Cell>
      <Cell>
        <g fill="#fff">{[5, 15, 25].map((y) => [3, 13, 23].map((x) => <rect key={`${x}-${y}`} x={x} y={y} width="4" height="4" />))}</g>
      </Cell>
    </div>
  );
}

export default function App() {
  return (
    <div className="relative h-[1080px] w-[1920px] overflow-hidden bg-[#05357c] font-['Noto_Sans',sans-serif]">
      <Wallpaper />
      <TopBar />
      <div className="absolute top-[52px] left-[395px] flex h-[909px] w-[1126px] flex-col overflow-hidden rounded-xl bg-white shadow-[0_2px_10px_rgba(0,0,0,.45)] ring-1 ring-[#404040]/40">
        <Header />
        <Tabs />
        <div className="relative flex-1">
          <Handwriting />
          <div className="flex h-full justify-end pr-[22px]"><span className="h-full w-[2px] bg-[#deddda]" /></div>
          <ColorBar />
          <SideBar />
          <ToolBar />
        </div>
      </div>
      <Dock />
    </div>
  );
}
